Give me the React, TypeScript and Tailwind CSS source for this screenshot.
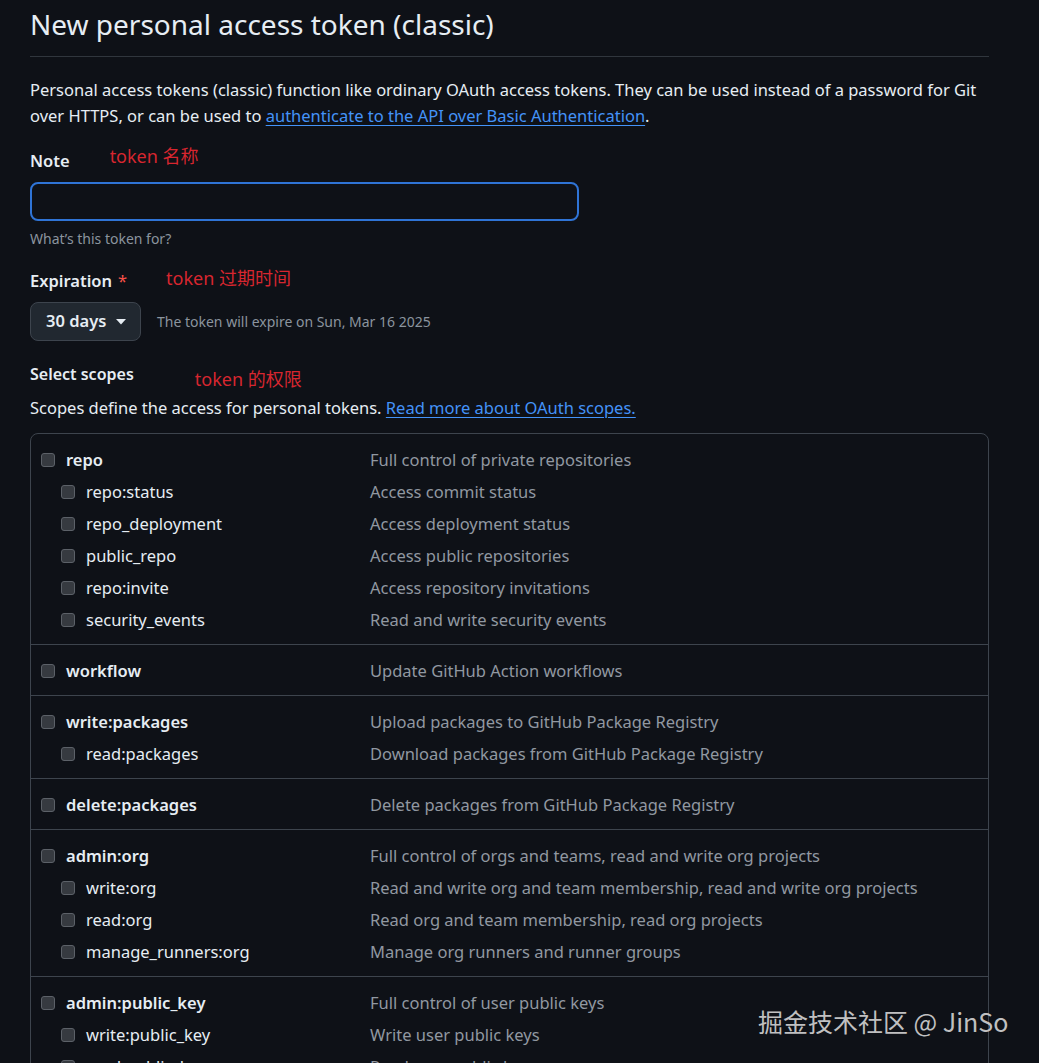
import React from 'react';

type Scope = { name: string; desc: string; sub?: boolean };

const groups: Scope[][] = [
  [
    { name: 'repo', desc: 'Full control of private repositories' },
    { name: 'repo:status', desc: 'Access commit status', sub: true },
    { name: 'repo_deployment', desc: 'Access deployment status', sub: true },
    { name: 'public_repo', desc: 'Access public repositories', sub: true },
    { name: 'repo:invite', desc: 'Access repository invitations', sub: true },
    { name: 'security_events', desc: 'Read and write security events', sub: true },
  ],
  [{ name: 'workflow', desc: 'Update GitHub Action workflows' }],
  [
    { name: 'write:packages', desc: 'Upload packages to GitHub Package Registry' },
    { name: 'read:packages', desc: 'Download packages from GitHub Package Registry', sub: true },
  ],
  [{ name: 'delete:packages', desc: 'Delete packages from GitHub Package Registry' }],
  [
    { name: 'admin:org', desc: 'Full control of orgs and teams, read and write org projects' },
    { name: 'write:org', desc: 'Read and write org and team membership, read and write org projects', sub: true },
    { name: 'read:org', desc: 'Read org and team membership, read org projects', sub: true },
    { name: 'manage_runners:org', desc: 'Manage org runners and runner groups', sub: true },
  ],
  [
    { name: 'admin:public_key', desc: 'Full control of user public keys' },
    { name: 'write:public_key', desc: 'Write user public keys', sub: true },
    { name: 'read:public_key', desc: 'Read user public keys', sub: true },
  ],
];

const font = { fontFamily: '"Noto Sans", "Noto Sans CJK SC", sans-serif' };

function Checkbox() {
  return <span className="block w-[14px] h-[14px] shrink-0 rounded-[3px] bg-[#363a40] border border-[#5c6168]" />;
}

// red hand-written annotations from the screenshot
function Note({ children, className = '' }: { children: React.ReactNode; className?: string }) {
  return (
    <span
      className={`block text-[18px] leading-[26px] text-[#d7262f] ${className}`}
      style={{ fontFamily: '"Noto Sans", "Noto Sans CJK SC", sans-serif' }}
    >
      {children}
    </span>
  );
}

export default function App() {
  return (
    <div className="relative h-[1063px] overflow-hidden bg-[#0e1117] text-[#e6edf3]" style={font}>
      <div className="ml-[30px] w-[959px]">
        {/* Header */}
        <div className="pt-[6px] pb-[13px] border-b border-[#30363d]">
          <h1 className="text-[28px] leading-[37px] font-normal">New personal access token (classic)</h1>
        </div>

        <p className="mt-[20px] text-[16.5px] leading-[26px]">
          Personal access tokens (classic) function like ordinary OAuth access tokens. They can be used instead of a password for Git over HTTPS, or can be used to{' '}
          <a className="text-[#4493f8] underline underline-offset-[3px]">authenticate to the API over Basic Authentication</a>.
        </p>

        {/* Note */}
        <div className="mt-[19px] flex items-start h-[26px]">
          <span className="text-[16.5px] leading-[26px] font-semibold">Note</span>
          <Note className="ml-[40px] -mt-[5px]">token 名称</Note>
        </div>
        <div className="mt-[8px] w-[549px] h-[39px] rounded-[8px] border-2 border-[#2f74d6] bg-[#0e1117]" />
        <div className="mt-[8px] text-[14px] leading-[20px] text-[#8b949e]">What’s this token for?</div>

        {/* Expiration */}
        <div className="mt-[19px] flex items-start h-[26px]">
          <span className="text-[16.5px] leading-[26px] font-semibold">Expiration</span>
          <span className="ml-[6px] text-[16.5px] leading-[26px] text-[#f85149]">*</span>
          <Note className="ml-[39px] -mt-[3px]">token 过期时间</Note>
        </div>
        <div className="mt-[8px] flex items-center">
          <button className="flex items-center h-[39px] w-[111px] pl-[15px] rounded-[8px] border border-[#3d444d] bg-[#212830] text-[16.5px] font-semibold">
            30 days
            <svg width="10" height="6" viewBox="0 0 10 6" className="ml-[10px]">
              <path d="M0 0h10L5 5.5z" fill="#e6edf3" />
            </svg>
          </button>
          <span className="ml-[16px] text-[14px] text-[#8b949e]">The token will expire on Sun, Mar 16 2025</span>
        </div>

        {/* Scopes */}
        <div className="mt-[20px] flex items-start h-[26px]">
          <span className="text-[16px] leading-[26px] font-semibold">Select scopes</span>
          <Note className="ml-[61px] mt-[5px]">token 的权限</Note>
        </div>
        <p className="mt-[8px] text-[16.5px] leading-[26px]">
          Scopes define the access for personal tokens.{' '}
          <a className="text-[#4493f8] underline underline-offset-[3px]">Read more about OAuth scopes.</a>
        </p>

        <div className="mt-[12px] rounded-[8px] border border-[#3d444d]">
          {groups.map((g, gi) => (
            <div key={gi} className={`pt-[10px] pb-[8px] ${gi > 0 ? 'border-t border-[#3d444d]' : ''}`}>
              {g.map((s) => (
                <div key={s.name} className="flex items-center h-[32px] text-[16.5px]">
                  <div className={`flex items-center w-[339px] ${s.sub ? 'pl-[30px]' : 'pl-[10px]'}`}>
                    <Checkbox />
                    <span className={`ml-[11px] ${s.sub ? '' : 'font-semibold'}`}>{s.name}</span>
                  </div>
                  <span className="text-[#9198a1]">{s.desc}</span>
                </div>
              ))}
            </div>
          ))}
        </div>
      </div>

      {/* watermark */}
      <div
        className="absolute left-[758px] top-[1004px] text-[25px] leading-[34px] text-[#d4d4d4] opacity-90"
        style={{ fontFamily: '"Noto Sans CJK SC", "Noto Sans", sans-serif' }}
      >
        掘金技术社区 @ JinSo
      </div>
    </div>
  );
}
